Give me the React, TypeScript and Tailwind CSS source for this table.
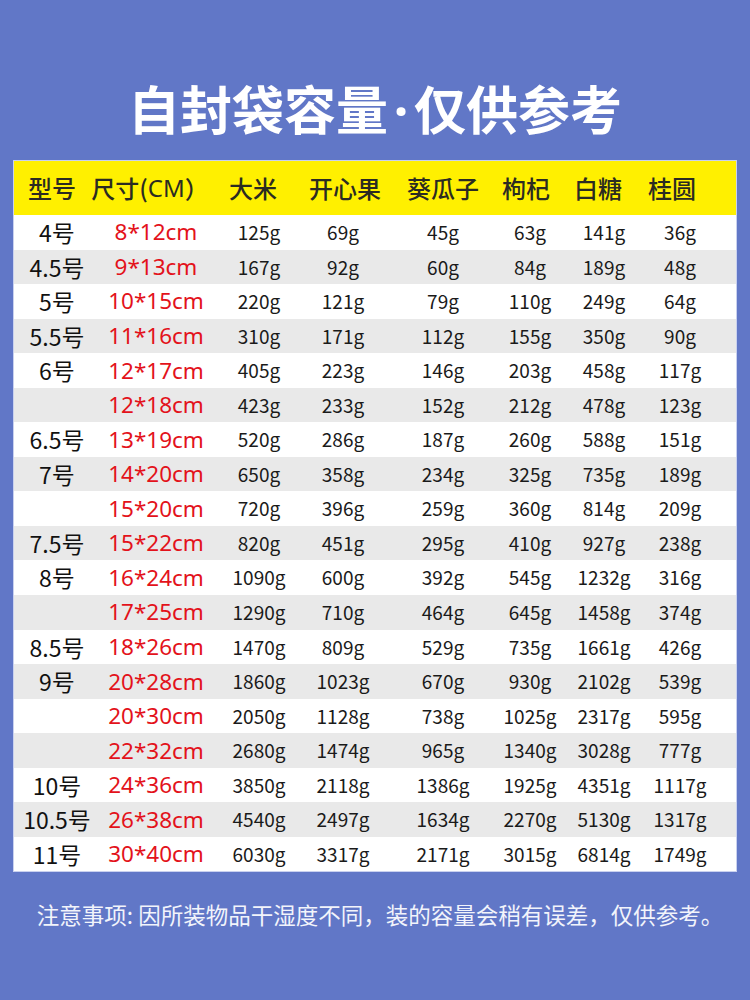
const rows: string[][] = [
  ['4号', '8*12cm', '125g', '69g', '45g', '63g', '141g', '36g'],
  ['4.5号', '9*13cm', '167g', '92g', '60g', '84g', '189g', '48g'],
  ['5号', '10*15cm', '220g', '121g', '79g', '110g', '249g', '64g'],
  ['5.5号', '11*16cm', '310g', '171g', '112g', '155g', '350g', '90g'],
  ['6号', '12*17cm', '405g', '223g', '146g', '203g', '458g', '117g'],
  ['', '12*18cm', '423g', '233g', '152g', '212g', '478g', '123g'],
  ['6.5号', '13*19cm', '520g', '286g', '187g', '260g', '588g', '151g'],
  ['7号', '14*20cm', '650g', '358g', '234g', '325g', '735g', '189g'],
  ['', '15*20cm', '720g', '396g', '259g', '360g', '814g', '209g'],
  ['7.5号', '15*22cm', '820g', '451g', '295g', '410g', '927g', '238g'],
  ['8号', '16*24cm', '1090g', '600g', '392g', '545g', '1232g', '316g'],
  ['', '17*25cm', '1290g', '710g', '464g', '645g', '1458g', '374g'],
  ['8.5号', '18*26cm', '1470g', '809g', '529g', '735g', '1661g', '426g'],
  ['9号', '20*28cm', '1860g', '1023g', '670g', '930g', '2102g', '539g'],
  ['', '20*30cm', '2050g', '1128g', '738g', '1025g', '2317g', '595g'],
  ['', '22*32cm', '2680g', '1474g', '965g', '1340g', '3028g', '777g'],
  ['10号', '24*36cm', '3850g', '2118g', '1386g', '1925g', '4351g', '1117g'],
  ['10.5号', '26*38cm', '4540g', '2497g', '1634g', '2270g', '5130g', '1317g'],
  ['11号', '30*40cm', '6030g', '3317g', '2171g', '3015g', '6814g', '1749g'],
]

// header and body columns sit on slightly different centres in the picture
const headGrid = 'grid grid-cols-[76px_120px_86px_98px_98px_68px_76px_72px_1fr]'
const bodyGrid = 'grid grid-cols-[86px_112px_94px_74px_126px_48px_100px_52px_1fr]'

export default function App() {
  return (
    <div className="flex h-[1000px] w-[750px] flex-col items-center bg-[#6177c7] font-['Noto_Sans_CJK_SC',sans-serif]">
      <h1 className="mt-[74px] text-[52px] font-bold leading-[68px] text-white">
        自封袋容量
        <span className="inline-block w-[26px] text-center font-['Noto_Sans',sans-serif]">·</span>
        仅供参考
      </h1>
      <div className="mt-[16px] w-[724px] border border-[#c9d1ef] bg-white">
        <div className={`${headGrid} h-[54px] items-center bg-[#fff000] text-[24px] font-medium text-[#2b2b22]`}>
          <div className="flex justify-center whitespace-nowrap">型号</div>
          <div className="flex justify-center whitespace-nowrap">
            尺寸(<span className="font-['Noto_Sans',sans-serif] font-normal">CM</span>）
          </div>
          <div className="flex justify-center whitespace-nowrap">大米</div>
          <div className="flex justify-center whitespace-nowrap">开心果</div>
          <div className="flex justify-center whitespace-nowrap">葵瓜子</div>
          <div className="flex justify-center whitespace-nowrap">枸杞</div>
          <div className="flex justify-center whitespace-nowrap">白糖</div>
          <div className="flex justify-center whitespace-nowrap">桂圆</div>
          <div />
        </div>
        {rows.map((r, ri) => (
          <div
            key={ri}
            className={`${bodyGrid} h-[34.55px] items-center ${ri % 2 === 1 ? 'bg-[#e9e9e9]' : 'bg-white'}`}
          >
            {r.map((v, ci) => (
              <div
                key={ci}
                className={
                  ci === 0
                    ? 'flex justify-center whitespace-nowrap text-[23px] text-[#111]'
                    : ci === 1
                      ? "flex justify-center whitespace-nowrap font-['Noto_Sans',sans-serif] text-[22.5px] text-[#e3121b]"
                      : 'flex justify-center whitespace-nowrap text-[19px] text-[#1a1a1a]'
                }
              >
                {v}
              </div>
            ))}
            <div />
          </div>
        ))}
      </div>
      <p className="mt-[26px] whitespace-nowrap pl-[10px] text-[22.5px] text-[#f2f4fb]">
        注意事项: 因所装物品干湿度不同，装的容量会稍有误差，仅供参考。
      </p>
    </div>
  )
}
